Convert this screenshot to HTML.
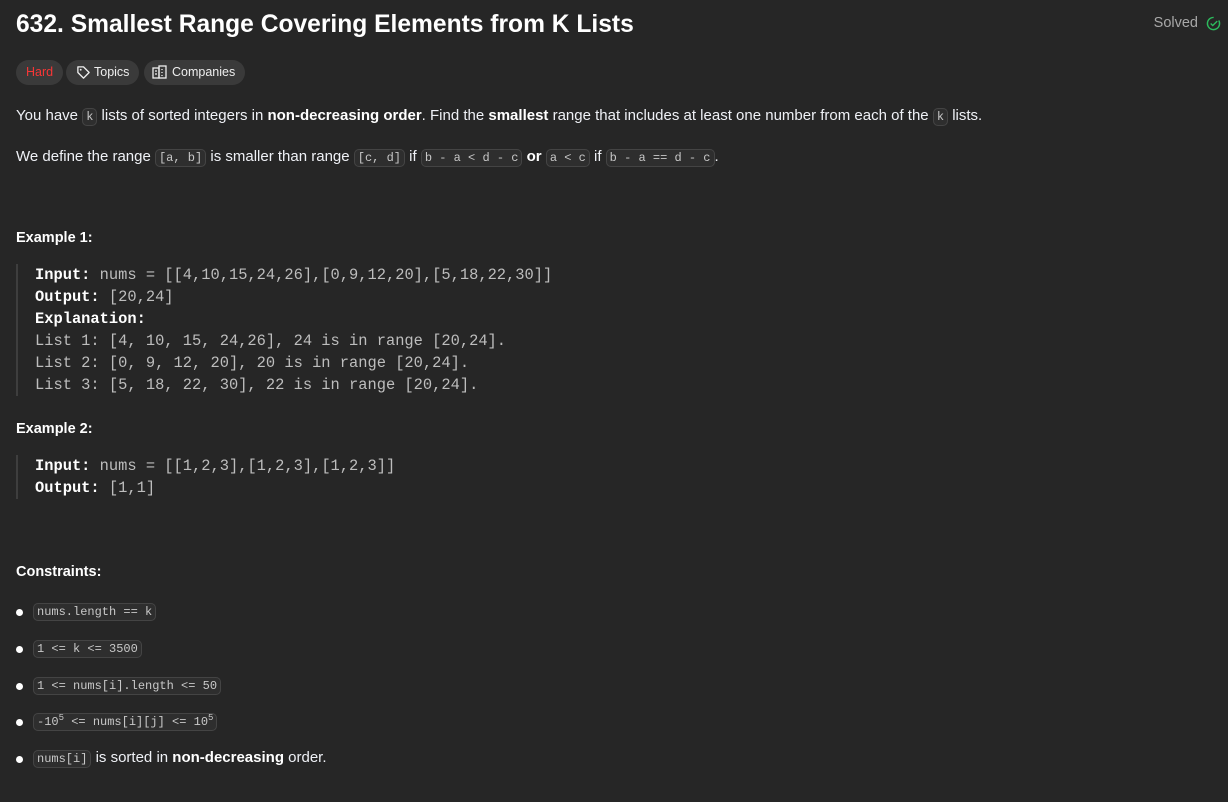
<!DOCTYPE html>
<html><head><meta charset="utf-8"><style>
*{margin:0;padding:0;box-sizing:border-box}
body{width:1228px;height:802px;background:#262626;color:#eff1f6;font-family:"Liberation Sans",sans-serif;font-size:15px;position:relative;overflow:hidden}
.a{position:absolute;white-space:nowrap}
h1{position:absolute;left:16px;top:9px;font-size:24.6px;font-weight:bold;color:#fff;line-height:32px}
.tag{position:absolute;top:60px;height:25px;border-radius:13px;background:#3a3a3a;font-size:12.5px;line-height:25px;padding:0 10px;color:#eee}
code{font-family:"Liberation Mono",monospace;font-size:12px;background:#2e2e2e;border:1px solid #444;border-radius:5px;padding:1px 3px;color:#c8c8c8}
b{color:#fff}
.blk{position:absolute;left:16px;border-left:2px solid #3e3e3e;padding-left:17px;font-family:"Liberation Mono",monospace;font-size:15.4px;line-height:22px;color:#bdbdbd;white-space:pre}
.blk b{color:#fff}
.h{position:absolute;left:16px;font-weight:bold;color:#fff;font-size:14.5px}
.li{position:absolute;left:16px;white-space:nowrap}
.li:before{content:"";position:absolute;left:0;top:7px;width:7px;height:7px;border-radius:4px;background:#fff}
.li span{position:absolute;left:17px;top:0;white-space:nowrap}
</style></head><body>
<h1>632. Smallest Range Covering Elements from K Lists</h1>
<div class="a" style="right:30px;top:15px;color:#a8a8a8;font-size:14.5px">Solved</div>
<svg class="a" style="right:7px;top:16px" width="15" height="15" viewBox="0 0 16 16"><circle cx="8" cy="8" r="6.5" fill="none" stroke="#2cbb5d" stroke-width="1.5" stroke-dasharray="34 7" transform="rotate(-30 8 8)"/><path d="M5 8l2.2 2.2L12 5.5" fill="none" stroke="#2cbb5d" stroke-width="1.5"/></svg>
<div class="tag" style="left:16px;color:#f63636">Hard</div>
<div class="tag" style="left:66px;padding-left:28px">Topics</div>
<svg class="a" style="left:76px;top:65px" width="15" height="15" viewBox="0 0 16 16"><path d="M2 2h6l6 6-6 6-6-6z" fill="none" stroke="#eee" stroke-width="1.4" stroke-linejoin="round"/><circle cx="5" cy="5" r="1" fill="#eee"/></svg>
<div class="tag" style="left:144px;padding-left:28px">Companies</div>
<svg class="a" style="left:152px;top:64px" width="16" height="16" viewBox="0 0 16 16" fill="none" stroke="#eee" stroke-width="1.3"><rect x="1" y="4" width="6" height="10"/><rect x="7" y="2" width="7" height="12"/><path d="M3 7h2M3 10h2M10 5v1M10 8v1M10 11v1"/></svg>
<div class="a" style="left:16px;top:107px">You have <code>k</code> lists of sorted integers in <b>non-decreasing order</b>. Find the <b>smallest</b> range that includes at least one number from each of the <code>k</code> lists.</div>
<div class="a" style="left:16px;top:148px">We define the range <code>[a, b]</code> is smaller than range <code>[c, d]</code> if <code>b - a &lt; d - c</code> <b>or</b> <code>a &lt; c</code> if <code>b - a == d - c</code>.</div>
<div class="h" style="top:230px">Example 1:</div>
<div class="blk" style="top:264px"><b>Input:</b> nums = [[4,10,15,24,26],[0,9,12,20],[5,18,22,30]]
<b>Output:</b> [20,24]
<b>Explanation:</b>
List 1: [4, 10, 15, 24,26], 24 is in range [20,24].
List 2: [0, 9, 12, 20], 20 is in range [20,24].
List 3: [5, 18, 22, 30], 22 is in range [20,24].</div>
<div class="h" style="top:421px">Example 2:</div>
<div class="blk" style="top:455px"><b>Input:</b> nums = [[1,2,3],[1,2,3],[1,2,3]]
<b>Output:</b> [1,1]</div>
<div class="h" style="top:564px">Constraints:</div>
<div class="li" style="top:602px"><span><code>nums.length == k</code></span></div>
<div class="li" style="top:639px"><span><code>1 &lt;= k &lt;= 3500</code></span></div>
<div class="li" style="top:676px"><span><code>1 &lt;= nums[i].length &lt;= 50</code></span></div>
<div class="li" style="top:712px"><span><code>-10<sup style="font-size:9px">5</sup> &lt;= nums[i][j] &lt;= 10<sup style="font-size:9px">5</sup></code></span></div>
<div class="li" style="top:749px"><span><code>nums[i]</code> is sorted in <b>non-decreasing</b> order.</span></div>
</body></html>
